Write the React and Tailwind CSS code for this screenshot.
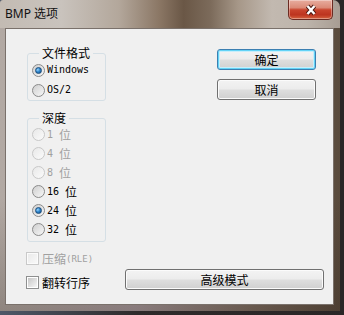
import React from "react";

const cjk = "font-['Noto_Sans_CJK_SC',sans-serif]";
const mono = "font-['DejaVu_Sans_Mono','Noto_Sans_CJK_SC',monospace]";

function Radio({ checked, disabled }) {
  return (
    <span
      className={`flex h-[13px] w-[13px] shrink-0 items-center justify-center rounded-full border ${
        disabled
          ? "border-[#c8c8c8] bg-[linear-gradient(135deg,#e8e8e8,#fbfbfb)]"
          : "border-[#8a8a8a] bg-[linear-gradient(135deg,#cfcfcf,#f7f7f7)]"
      }`}
    >
      {checked && (
        <span className="h-[7px] w-[7px] rounded-full border border-[#1b4d7c] bg-[radial-gradient(circle_at_35%_35%,#9ad6ff_0%,#2f86cc_45%,#0f4c88_100%)]" />
      )}
    </span>
  );
}

function Check({ disabled }) {
  return (
    <span
      className={`flex h-[13px] w-[13px] shrink-0 items-center justify-center border ${
        disabled ? "border-[#c9c9c9] bg-[#fbfbfb]" : "border-[#8e8f8f] bg-white"
      }`}
    >
      <span
        className={`h-[9px] w-[9px] ${
          disabled
            ? "bg-[linear-gradient(135deg,#eaeaea,#f8f8f8)]"
            : "bg-[linear-gradient(135deg,#c6c6c6,#f6f6f6)]"
        }`}
      />
    </span>
  );
}

function RadioRow({ label, unit, checked, disabled, h }) {
  return (
    <div className={`flex items-center ${h}`}>
      <Radio checked={checked} disabled={disabled} />
      <span
        className={`ml-[2px] flex items-center text-[10px] leading-[14px] ${mono} ${
          disabled ? "text-[#a0a0a0]" : "text-black"
        }`}
      >
        <span className="whitespace-pre">{label}</span>
        {unit && <span className={`text-[12px] ${cjk}`}>{unit}</span>}
      </span>
    </div>
  );
}

function Btn({ children, def, className }) {
  return (
    <div
      className={`flex h-[21px] items-center justify-center rounded-[3px] border text-[12px] leading-[14px] text-black ${cjk} bg-[linear-gradient(180deg,#f3f3f3_0%,#ececec_48%,#dedede_52%,#d0d0d0_100%)] ${
        def
          ? "border-[#3c7fb1] shadow-[inset_0_0_0_1px_#63d3f6,inset_0_0_0_2px_#c7eefb]"
          : "border-[#707070] shadow-[inset_0_0_0_1px_#fbfbfb]"
      } ${className}`}
    >
      {children}
    </div>
  );
}

export default function App() {
  return (
    <div className="h-[315px] w-[344px] overflow-hidden bg-[linear-gradient(90deg,#4e5868,#2e2a2a_40%,#2a2626)]">
      <div className="flex h-[311px] w-[340px] flex-col overflow-hidden rounded-tl-[3px] rounded-tr-[7px]">
        {/* title bar */}
        <div className="flex h-[28px] shrink-0 items-start pr-[7px] pl-[5px] bg-[linear-gradient(90deg,#c3bbb3_0%,#c9c3bd_18%,#b3a79b_35%,#8a7664_47%,#6a5746_54%,#7c6b5b_62%,#a69788_70%,#c2b9b0_80%,#bdb4ab_90%,#a89d93_100%)]">
          <span className={`mt-[6px] text-[12px] leading-[16px] text-[#111] font-['Noto_Sans','Noto_Sans_CJK_SC',sans-serif]`}>
            BMP 选项
          </span>
          <div className="ml-auto flex h-[20px] w-[45px] items-center justify-center rounded-b-[5px] border border-t-0 border-[#6b2b22] bg-[linear-gradient(180deg,#e8ad9f_0%,#db8a77_40%,#c9442d_52%,#bd341f_78%,#d4633f_100%)] shadow-[inset_0_0_0_1px_rgba(255,255,255,0.35)]">
            <svg width="14" height="12" viewBox="0 0 14 12">
              <path d="M3.5 2 L10.5 10 M10.5 2 L3.5 10" stroke="#4a1810" strokeWidth="4.2" />
              <path d="M3.5 2 L10.5 10 M10.5 2 L3.5 10" stroke="#ffffff" strokeWidth="2.4" />
            </svg>
          </div>
        </div>
        {/* body frame */}
        <div className="flex flex-1 flex-col pr-[6px] pb-[6px] pl-[5px] bg-[linear-gradient(180deg,rgba(0,0,0,0)_0%,rgba(0,0,0,0)_60%,rgba(40,28,20,0.25)_100%),linear-gradient(90deg,#b2a9a3_0%,#a89a9e_40%,#7c6c60_75%,#594a3c_100%)]">
          <div className="flex flex-1 flex-col border border-[#7a716b] bg-[#f0f0f0] pl-[20px]">
            <div className="flex">
              {/* left column */}
              <div className="flex w-[80px] flex-col">
                <div className="relative ml-[1px] mt-[24px] rounded-[3px] border border-[#d5dfe5] pt-[6px] pl-[4px]">
                  <span className={`absolute left-[11px] top-[-8px] bg-[#f0f0f0] px-[3px] text-[12px] leading-[14px] text-black ${cjk}`}>
                    文件格式
                  </span>
                  <RadioRow label="Windows" checked h="h-[20px]" />
                  <RadioRow label="OS/2" h="h-[20px]" />
                </div>
                <div className="relative ml-[1px] mt-[17px] rounded-[3px] border border-[#d5dfe5] pt-[6px] pb-[2px] pl-[4px]">
                  <span className={`absolute left-[11px] top-[-8px] bg-[#f0f0f0] px-[3px] text-[12px] leading-[14px] text-black ${cjk}`}>
                    深度
                  </span>
                  <RadioRow label="1 " unit="位" disabled h="h-[19px]" />
                  <RadioRow label="4 " unit="位" disabled h="h-[19px]" />
                  <RadioRow label="8 " unit="位" disabled h="h-[19px]" />
                  <RadioRow label="16 " unit="位" h="h-[19px]" />
                  <RadioRow label="24 " unit="位" checked h="h-[19px]" />
                  <RadioRow label="32 " unit="位" h="h-[19px]" />
                </div>
                <div className="mt-[7px] flex h-[19px] items-center">
                  <Check disabled />
                  <span className={`ml-[3px] text-[12px] leading-[14px] text-[#a0a0a0] ${cjk}`}>压缩</span>
                  <span className={`text-[9px] leading-[14px] text-[#a0a0a0] ${mono}`}>(RLE)</span>
                </div>
              </div>
              {/* right column */}
              <div className="ml-auto mr-[17px] mt-[20px] flex w-[99px] flex-col gap-[9px]">
                <Btn def>确定</Btn>
                <Btn>取消</Btn>
              </div>
            </div>
            {/* bottom row */}
            <div className="mt-[1px] flex items-start">
              <div className="mt-[4px] flex h-[19px] items-center">
                <Check />
                <span className={`ml-[3px] text-[12px] leading-[14px] text-black ${cjk}`}>翻转行序</span>
              </div>
              <Btn className="ml-auto mr-[9px] w-[199px]">高级模式</Btn>
            </div>
          </div>
        </div>
      </div>
    </div>
  );
}
